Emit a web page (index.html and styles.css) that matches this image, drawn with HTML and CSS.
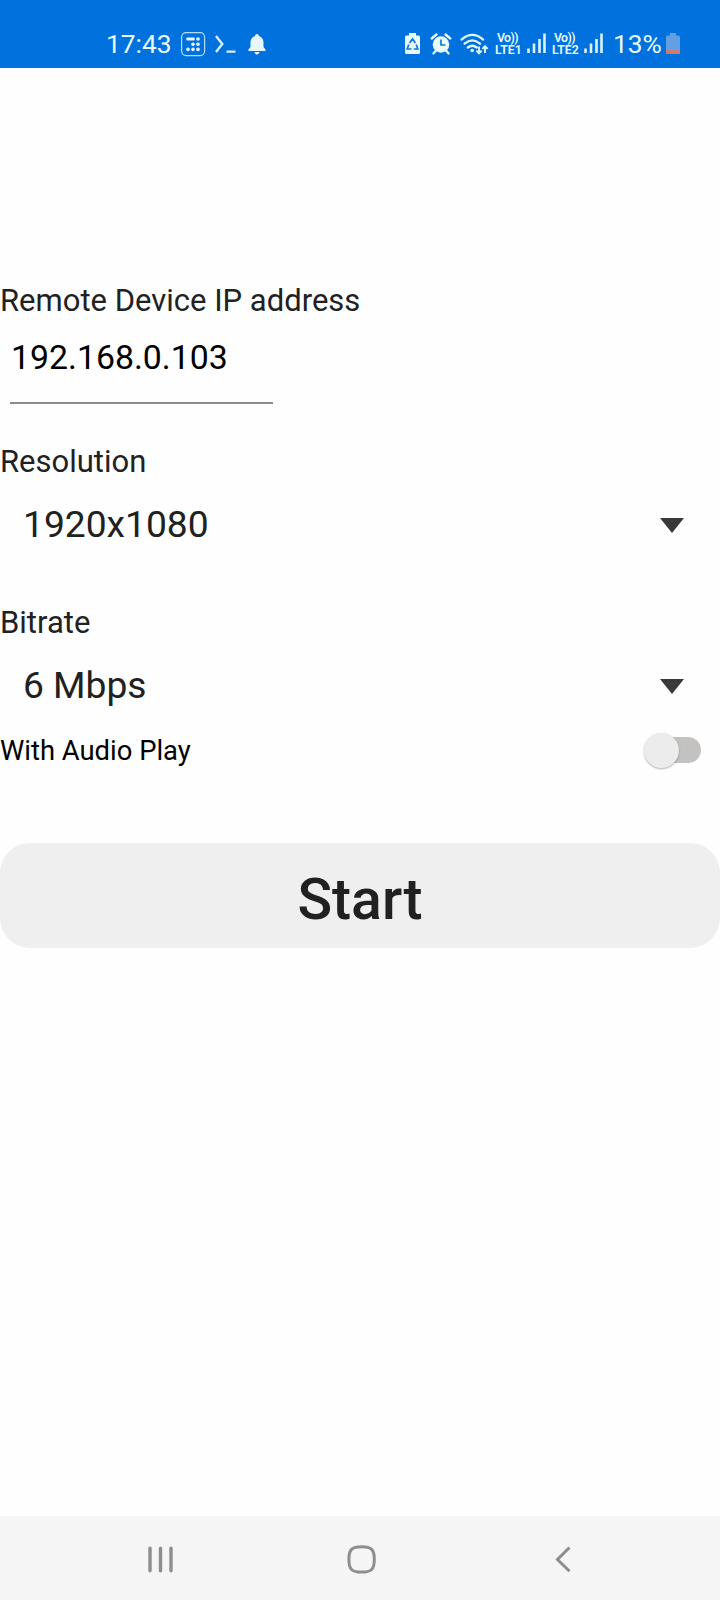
FILE: index.html
```html
<!DOCTYPE html>
<html lang="en">
<head>
<meta charset="utf-8">
<meta name="viewport" content="width=device-width, initial-scale=1">
<title>Remote Device</title>
<link rel="stylesheet" href="styles.css">
</head>
<body>
<div class="screen">
  <header class="status">
    <div class="status-group">
      <span class="clock">17:43</span>
      <svg class="icon-left" width="90" height="68" viewBox="180 0 90 68">
        <rect x="181.6" y="32.6" width="23" height="23" rx="4.5" fill="none" stroke="#b5dcfc" stroke-width="1.2"/>
        <g fill="#e8f8ff">
          <rect x="186.3" y="37.5" width="8.4" height="3" rx="1"/>
          <circle cx="198" cy="39" r="1.8"/><circle cx="193" cy="44.2" r="1.8"/><circle cx="198" cy="44.2" r="1.8"/>
          <circle cx="188" cy="49.4" r="1.8"/><circle cx="193" cy="49.4" r="1.8"/><circle cx="198" cy="49.4" r="1.8"/>
        </g>
        <path d="M216 36l6.3 8-6.3 8M226.5 51.6h9" fill="none" stroke="#d5efff" stroke-width="2.4"/>
        <path d="M257 34c1.2 0 1.9.8 1.9 2 3.1 1 4.6 3.3 4.6 6.5v4.5l2 2.5v1.5h-17v-1.5l2-2.5v-4.5c0-3.2 1.5-5.5 4.6-6.5 0-1.2.7-2 1.9-2zM254.7 52h4.6c0 1.500-1 2.4-2.3 2.4s-2.3-.9-2.3-2.4z" fill="#e8f7ff"/>
      </svg>
    </div>
    <div class="status-group">
      <svg width="90" height="68" viewBox="403 0 90 68">
        <path d="M409 33h7v2.500h2.500q1.500 0 1.500 1.500v15.500q0 1.500-1.500 1.500h-12q-1.500 0-1.500-1.500V37q0-1.500 1.500-1.500h2.500z" fill="#e8fbff"/>
        <path d="M409.500 43l3-4 3 4M416.200 44.500l1.600 4.500h-4M411.500 49h-4.300l1.600-4.500" fill="none" stroke="#1375d5" stroke-width="1.700"/>
        <circle cx="441" cy="44.500" r="8.300" fill="#e8fbff"/>
        <path d="M431.700 38.500l4.800-4M450.300 38.500l-4.800-4M436 50.500l-2.600 3M446 50.500l2.600 3" stroke="#e8fbff" stroke-width="2.300" stroke-linecap="round"/>
        <path d="M441 39.500v5.500h4.500" fill="none" stroke="#1375d5" stroke-width="1.700"/>
        <path d="M461.500 39.600q10.800-9.400 21.600 0M464.600 43.700q7.700-6.600 15.400 0M467.800 47.500q4.500-3.600 9 0" fill="none" stroke="#e0f7ff" stroke-width="2.300" stroke-linecap="round"/>
        <circle cx="472.200" cy="50.500" r="1.800" fill="#e8fbff"/>
        <path d="M479 46.500v6.800m-2.600-2.700l2.600 2.900 2.600-2.900M485 53v-6.800m-2.600 2.700l2.600-2.900 2.600 2.900" fill="none" stroke="#e8fbff" stroke-width="1.800"/>
      </svg>
      <span class="volte"><span class="vo">Vo))</span><span>LTE1</span></span>
      <svg class="signal" width="20" height="68" viewBox="0 0 20 68"><path d="M1.500 48.500v4.500M7 43.500v9.500M12.500 39v14M17.500 33.500v19.500" stroke="#d8f4ff" stroke-width="2.600"/></svg>
      <span class="volte"><span class="vo">Vo))</span><span>LTE2</span></span>
      <svg class="signal" width="20" height="68" viewBox="0 0 20 68"><path d="M1.500 48.500v4.500M7 43.500v9.500M12.500 39v14M17.500 33.500v19.500" stroke="#d8f4ff" stroke-width="2.600"/></svg>
      <span class="percent">13%</span>
      <svg width="16" height="68" viewBox="665 0 16 68">
        <path d="M670 33h6v2.500h2.500q1.500 0 1.500 1.500v15.500q0 1.500-1.500 1.500h-11q-1.500 0-1.500-1.500V37q0-1.500 1.500-1.500h2.500z" fill="#629fe3"/>
        <path d="M666 50.300h14v2.200q0 1.500-1.500 1.500h-11q-1.500 0-1.500-1.500z" fill="#dc7767"/>
      </svg>
    </div>
  </header>

  <main class="form">
    <label class="label" for="ip">Remote Device IP address</label>
    <input class="ip" id="ip" type="text" value="192.168.0.103">
    <div class="label label-resolution">Resolution</div>
    <div class="select"><span class="value">1920x1080</span><svg width="24" height="15" viewBox="0 0 24 15"><path d="M0 0h24L12 15z" fill="#393939"/></svg></div>
    <div class="label label-bitrate">Bitrate</div>
    <div class="select"><span class="value">6 Mbps</span><svg width="24" height="15" viewBox="0 0 24 15"><path d="M0 0h24L12 15z" fill="#393939"/></svg></div>
    <div class="audio"><span class="audio-text">With Audio Play</span><span class="switch"><span class="thumb"></span></span></div>
    <button class="start" type="button">Start</button>
  </main>

  <nav class="nav">
    <svg width="240" height="84" viewBox="0 1516 240 84"><path d="M150 1548.300v22.400M160.500 1548.300v22.400M171 1548.300v22.400" stroke="#8e8e8e" stroke-width="3.400" stroke-linecap="round"/></svg>
    <svg width="240" height="84" viewBox="240 1516 240 84"><path d="M361.600 1546.700c9.900 0 12.700 2.800 12.700 12.700s-2.800 12.700-12.700 12.700-12.700-2.800-12.700-12.700 2.800-12.700 12.700-12.700z" fill="none" stroke="#8e8e8e" stroke-width="3"/></svg>
    <svg width="240" height="84" viewBox="480 1516 240 84"><path d="M569.500 1547.500l-12 12 12 11.800" fill="none" stroke="#8e8e8e" stroke-width="3"/></svg>
  </nav>
</div>
</body>
</html>
```
FILE: styles.css
```css
* { box-sizing: border-box; }
body { margin: 0; background: #fefefe; font-family: Roboto, sans-serif; color: #212121; }
.screen { width: 720px; height: 1600px; display: flex; flex-direction: column; overflow: hidden; }
.status { height: 68px; flex: none; background: #0071dd; color: #e8fbff; display: flex; justify-content: space-between; padding: 0 39px 0 106px; }
.status-group { display: flex; align-items: flex-start; white-space: nowrap; }
.status svg { display: block; flex: none; }
.clock { width: 74px; padding-top: 29px; font-size: 26.3px; line-height: 30px; }
.percent { width: 52px; margin-left: 9px; padding-top: 29px; font-size: 26.3px; line-height: 30px; }
.volte { width: 29px; padding: 32px 0 0 2px; display: flex; flex-direction: column; font-size: 12.3px; line-height: 12px; font-weight: 600; }
.vo { padding-left: 2px; letter-spacing: -.6px; }
.signal { margin-left: 5px; }
.signal + .volte { margin-left: 3px; }
.form { flex: 1; padding-top: 215px; display: flex; flex-direction: column; }
.label { display: block; height: 36px; line-height: 36px; font-size: 31px; }
.ip { width: 263px; height: 78px; margin: 7px 0 0 10px; padding: 0 0 13px 1px; border: 0; border-bottom: 2px solid #8b8b8b; background: none; outline: 0; font: 33.8px Roboto, sans-serif; color: #000; }
.label-resolution { margin-top: 40px; }
.label-bitrate { margin-top: 58px; }
.select { height: 44px; margin-top: 23px; padding: 0 36px 0 23px; display: flex; align-items: center; justify-content: space-between; font-size: 37.2px; }
.value { padding-bottom: 2px; }
.audio { height: 44px; margin-top: 20px; padding-right: 19px; display: flex; align-items: center; justify-content: space-between; font-size: 27.4px; color: #000; }
.audio-text { padding-top: 2px; }
.switch { width: 56px; height: 26px; border-radius: 13px; background: linear-gradient(to right, transparent 14px, #c3c2c0 14px); display: flex; align-items: center; }
.thumb { width: 35px; height: 35px; margin-left: -1px; flex: none; border-radius: 50%; background: #ececec; box-shadow: 0 1px 2px rgba(0,0,0,.3); }
.start { height: 105px; margin-top: 71px; border: 0; padding: 8px 0 0; border-radius: 30px; background: #efefef; color: #212121; font: 500 57.2px Roboto, sans-serif; }
.nav { height: 84px; flex: none; padding: 0; display: flex; background: #f5f5f5; }
```
